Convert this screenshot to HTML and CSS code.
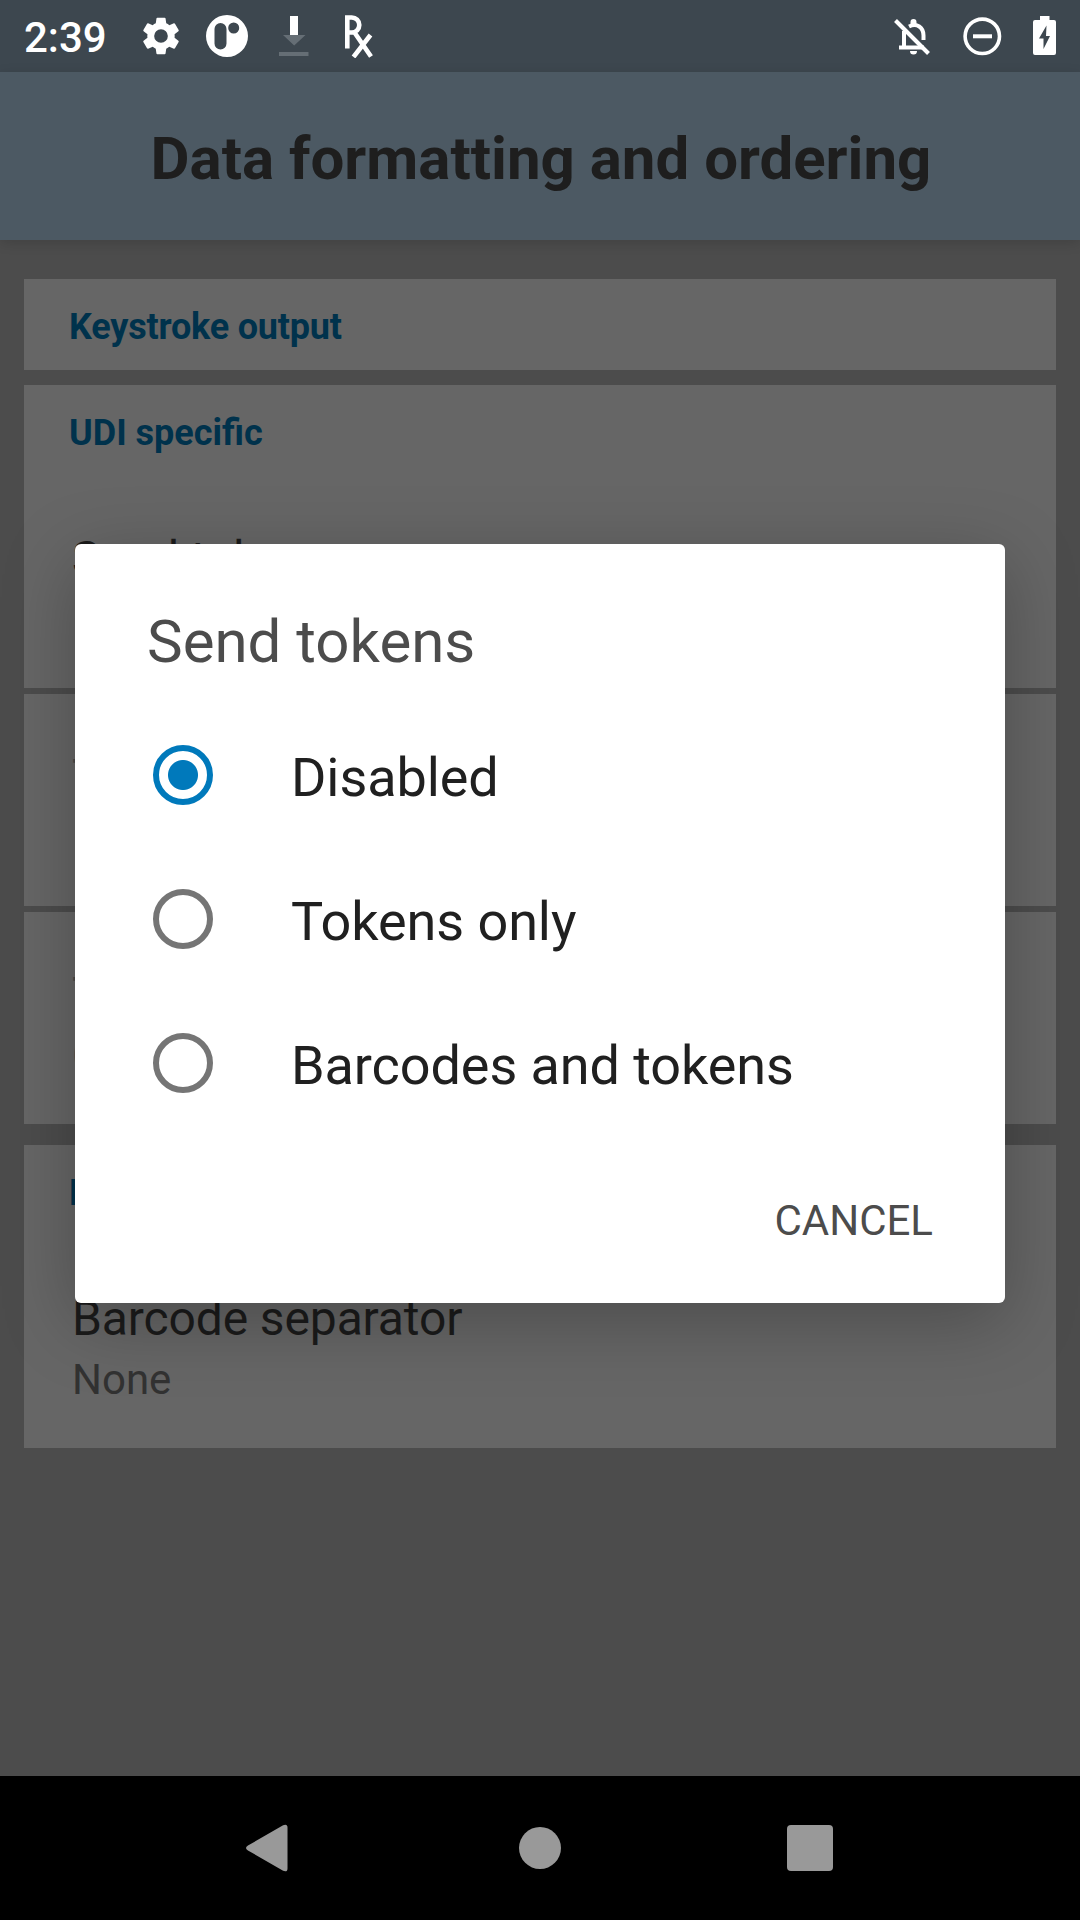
FILE: index.html
```html
<!DOCTYPE html>
<html lang="en">
<head>
<meta charset="utf-8">
<title>Data formatting and ordering</title>
<link rel="stylesheet" href="styles.css">
</head>
<body>
<div class="screen">
  <header class="status-bar">
    <span class="clock">2:39</span>
    <svg class="ic ic-gear" viewBox="2 2 20 20"><path d="M19.14 12.94c.04-.3.06-.61.06-.94s-.02-.64-.07-.94l2.03-1.58a.49.49 0 0 0 .12-.61l-1.92-3.32a.49.49 0 0 0-.59-.22l-2.39.96a7 7 0 0 0-1.62-.94l-.36-2.54A.48.48 0 0 0 13.92 2.400h-3.84a.47.47 0 0 0-.47.41l-.36 2.54c-.59.24-1.13.57-1.62.94l-2.390-.96a.47.47 0 0 0-.59.22L2.740 8.870a.47.47 0 0 0 .12.61l2.030 1.580c-.05.3-.09.63-.09.94s.02.64.07.94l-2.030 1.580a.49.49 0 0 0-.12.61l1.920 3.320c.12.22.37.29.59.22l2.390-.96c.5.38 1.030.7 1.620.94l.36 2.540c.05.24.24.41.48.41h3.840c.24 0 .44-.17.47-.41l.36-2.540a7 7 0 0 0 1.620-.94l2.390.96c.22.08.47 0 .59-.22l1.920-3.320a.47.47 0 0 0-.12-.61zM12 15.600a3.600 3.600 0 1 1 0-7.200 3.600 3.600 0 0 1 0 7.200z"/></svg>
    <svg class="ic ic-pill" viewBox="0 0 42 42"><path fill-rule="evenodd" d="M21 0a21 21 0 1 1 0 42 21 21 0 0 1 0-42zM14.500 8A6 6 0 0 0 8.500 14v14.500a6 6 0 0 0 12 0V14a6 6 0 0 0-6-6zM27.700 7.500a5.500 5.500 0 1 0 0 11 5.500 5.500 0 0 0 0-11z"/></svg>
    <svg class="ic ic-download" viewBox="0 0 30 40"><path d="M11 0h8v19h-8z"/><path class="dim" d="M4 19h22.500L15.200 29.500zM0 36h29.500v4H0z"/></svg>
    <svg class="ic ic-rx" viewBox="0 0 30 43"><path class="line" d="M3.300 33.500V2.500h4.500a7.500 7.500 0 0 1 0 15H3.300M10.500 17.500l16.500 24M26.500 20L9.500 42"/></svg>
    <span class="spacer"></span>
    <svg class="ic ic-bell" viewBox="0 0 36 38"><path class="bell" d="M10 13v16M5 29.500h25M15 8.500c8-4 14.500 1 14.500 9V22"/><path d="M16.500 4a3 3 0 0 1 6 0v2h-6zM16 33h7a3.500 3.500 0 0 1-7 0z"/><path class="bell" d="M1.500 2.500l33 33"/></svg>
    <svg class="ic ic-dnd" viewBox="0 0 38 38"><circle class="ring" cx="19.300" cy="19.300" r="17.200"/><path d="M10 17.300h19v4H10z"/></svg>
    <svg class="ic ic-battery" viewBox="0 0 23 39"><path fill-rule="evenodd" d="M7 0h9.500v4H21a2 2 0 0 1 2 2v31a2 2 0 0 1-2 2H2a2 2 0 0 1-2-2V6a2 2 0 0 1 2-2h5zM13.500 9.500L6 22.500h4.500v10.500L17 20h-4z"/></svg>
  </header>
  <div class="app-bar"><h1>Data formatting and ordering</h1></div>
  <main class="settings">
    <section class="card"><h2 class="tight">Keystroke output</h2></section>
    <section class="group">
      <div class="card card-udi"><h2>UDI specific</h2><div class="pref"><p class="name">Send tokens</p></div></div>
      <div class="card card-item"><div class="pref off"><p class="name">T</p></div></div>
      <div class="card card-item"><div class="pref off"><p class="name">T</p><p class="value">C</p></div></div>
    </section>
    <section class="card card-last"><h2>B</h2><div class="pref"><p class="name">Barcode separator</p><p class="value">None</p></div></section>
  </main>
  <nav class="nav-bar">
    <svg class="nav-back" viewBox="0 0 43 48"><path d="M38 .6L2 21.500q-4 2.500 0 5l36 20.900q4.500 1.500 4.500-2.500V3.100q0-4-4.500-2.500z"/></svg>
    <span class="nav-home"></span>
    <span class="nav-recent"></span>
  </nav>
  <div class="dialog" role="dialog">
    <p class="dialog-title">Send tokens</p>
    <div class="option checked"><span class="radio"></span><span class="label">Disabled</span></div>
    <div class="option"><span class="radio"></span><span class="label">Tokens only</span></div>
    <div class="option"><span class="radio"></span><span class="label">Barcodes and tokens</span></div>
    <div class="actions"><span class="cancel">CANCEL</span></div>
  </div>
</div>
</body>
</html>
```
FILE: styles.css
```css
* { box-sizing: border-box; margin: 0; padding: 0; }
body { font-family: Roboto, sans-serif; background: #4c4c4c; }
.screen { position: relative; width: 1080px; height: 1920px; display: flex; flex-direction: column; overflow: hidden; background: #4c4c4c; }

.status-bar { display: flex; height: 72px; padding: 0 24px; background: #3d474f; color: #fff; }
.clock { width: 118px; font-size: 42px; font-weight: 500; line-height: 49px; padding-top: 13px; }
.ic { fill: #fff; flex: none; }
.ic-gear { width: 38px; height: 38px; margin-top: 17px; }
.ic-pill { width: 42px; height: 42px; margin: 15px 0 0 26px; }
.ic-download { width: 30px; height: 40px; margin: 16px 0 0 31px; }
.dim { fill: #656e75; }
.ic-rx { width: 30px; height: 43px; margin: 15px 0 0 35px; }
.line { fill: none; stroke: #fff; stroke-width: 4.600; }
.spacer { flex: 1; }
.ic-bell { width: 36px; height: 38px; margin: 18px 33px 0 0; }
.bell { fill: none; stroke: #fff; stroke-width: 4; }
.ic-dnd { width: 38px; height: 38px; margin: 17px 32px 0 0; overflow: visible; }
.ring { fill: none; stroke: #fff; stroke-width: 3.600; }
.ic-battery { width: 23px; height: 39px; margin: 16px 0 0; }

.app-bar { height: 168px; padding: 52px 0 0 2px; background: #4c5963; text-align: center; box-shadow: 0 3px 12px rgba(0, 0, 0, .14); }
h1 { font-size: 60px; line-height: 70px; font-weight: 700; color: #1e1e1e; }

.settings { flex: 1; display: flex; flex-direction: column; padding: 39px 24px 0; }
.card { height: 91px; padding: 27px 45px 0; background: #666; overflow: hidden; }
h2 { font-size: 36px; line-height: 42px; font-weight: 700; color: #00324c; }
.tight { letter-spacing: -.2px; }
.group { display: flex; flex-direction: column; gap: 6px; margin: 15px 0 21px; }
.card-udi { height: 303px; }
.card-item { height: 212px; padding-top: 55px; }
.card-last { height: 303px; }
.pref { padding-left: 3px; }
.card h2 + .pref { margin-top: 77px; }
.name { font-size: 48px; line-height: 56px; letter-spacing: -.12px; color: #1b1b1b; }
.value { font-size: 42px; line-height: 49px; margin-top: 8px; color: #323232; }
.off .name { color: #484848; }
.off .value { color: #505050; }

.nav-bar { height: 144px; display: flex; align-items: center; background: #000; padding-left: 246px; }
.nav-back { width: 42px; height: 48px; fill: #999; }
.nav-home { width: 42px; height: 42px; margin-left: 231px; border-radius: 50%; background: #999; }
.nav-recent { width: 46px; height: 46px; margin-left: 226px; border-radius: 4px; background: #999; }

.dialog { position: absolute; left: 75px; top: 544px; width: 930px; height: 759px; padding: 63px 72px 0; display: flex; flex-direction: column; background: #fff; border-radius: 6px; box-shadow: 0 18px 72px rgba(0, 0, 0, .26); }
.dialog-title { font-size: 60px; line-height: 70px; margin-bottom: 26px; color: #4c4c4c; }
.option { display: flex; align-items: center; height: 144px; padding-left: 6px; gap: 78px; font-size: 54px; line-height: 63px; color: #202020; }
.label { padding-top: 4px; letter-spacing: -.08px; }
.radio { width: 60px; height: 60px; border: 6px solid #757575; border-radius: 50%; }
.checked .radio { border-color: #0079bb; background: radial-gradient(circle, #0079bb 14.500px, transparent 15.500px); }
.actions { display: flex; justify-content: flex-end; padding-top: 61px; }
.cancel { font-size: 42px; line-height: 49px; color: #4c4c4c; }
```
